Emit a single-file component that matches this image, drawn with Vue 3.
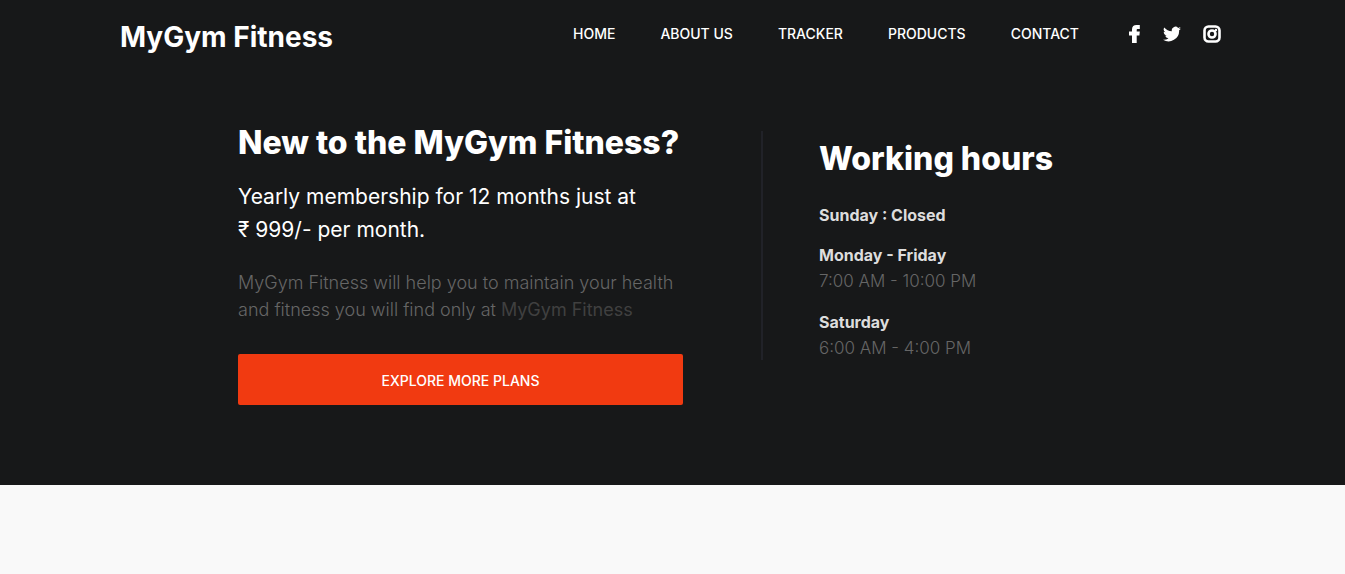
<script setup>
const links = ['Home', 'About us', 'Tracker', 'Products', 'Contact']
const hours = [
  { day: 'Monday - Friday', time: '7:00 AM - 10:00 PM' },
  { day: 'Saturday', time: '6:00 AM - 4:00 PM' },
]
</script>

<template>
  <div class="page">
    <header class="navbar">
      <a class="brand" href="#">MyGym Fitness</a>
      <nav class="menu" aria-label="Main">
        <a v-for="link in links" :key="link" href="#">{{ link }}</a>
      </nav>
      <div class="social">
        <a href="#" aria-label="Facebook">
          <svg width="12" height="18" viewBox="0 0 12 18"><path d="M3 18V10.500H0V6.500H3V4.300C3 1.500 4.700 0 7.500 0H10.800V4H9C8 4 7.700 4.400 7.700 5V6.500H10.800L10.400 10.500H7.700V18Z" /></svg>
        </a>
        <a href="#" aria-label="Twitter">
          <svg width="18" height="18" viewBox="0 0 24 24"><path d="M24 4.600a10 10 0 0 1-2.800.8 5 5 0 0 0 2.100-2.700 10 10 0 0 1-3.100 1.200 4.900 4.900 0 0 0-8.400 4.500A14 14 0 0 1 1.700 3.200 4.900 4.900 0 0 0 3.200 9.700a5 5 0 0 1-2.200-.6 4.900 4.900 0 0 0 3.900 4.900 5 5 0 0 1-2.200.1 4.900 4.900 0 0 0 4.600 3.400A10 10 0 0 1 0 19.500 14 14 0 0 0 21.500 7 10 10 0 0 0 24 4.600Z" /></svg>
        </a>
        <a href="#" aria-label="Instagram">
          <svg width="18" height="18" viewBox="0 0 18 18"><rect class="line" x="1.500" y="1.500" width="15" height="15" rx="4" /><circle class="line" cx="9" cy="9" r="3.500" /><circle cx="13" cy="5" r="1.200" /></svg>
        </a>
      </div>
    </header>

    <main class="intro">
      <section class="offer">
        <h2>New to the MyGym Fitness?</h2>
        <p class="price">Yearly membership for 12 months just at<br />₹ 999/- per month.</p>
        <p class="about">
          <span>MyGym Fitness will help you to maintain your health</span>
          <span>and fitness you will find only at</span>
          <a href="#">MyGym Fitness</a>
        </p>
        <button type="button">Explore more plans</button>
      </section>
      <section class="hours">
        <h2>Working hours</h2>
        <p class="closed"><strong>Sunday : Closed</strong></p>
        <dl>
          <template v-for="item in hours" :key="item.day">
            <dt>{{ item.day }}</dt>
            <dd>{{ item.time }}</dd>
          </template>
        </dl>
      </section>
    </main>
  </div>
</template>

<style>
body {
  background: #f9f9f9;
}
</style>

<style scoped>
.page {
  background: #171819;
  color: #fff;
  font-family: Inter, "Liberation Sans", sans-serif;
  padding-bottom: 80px;
}
a {
  color: inherit;
  text-decoration: none;
}
h2, p, dl, dd {
  margin: 0;
}
.navbar {
  box-sizing: border-box;
  max-width: 1105px;
  margin: 0 auto;
  padding: 20px 4px 20px 0;
  display: flex;
  align-items: flex-start;
}
.brand {
  font-size: 28px;
  line-height: 34px;
  font-weight: 700;
}
.menu {
  display: flex;
  gap: 45px;
  margin-left: auto;
  font-size: 14px;
  line-height: 28px;
  font-weight: 500;
  text-transform: uppercase;
}
.social {
  display: flex;
  gap: 22px;
  align-items: center;
  height: 28px;
  margin-left: 50px;
}
.social svg {
  display: block;
  fill: #fff;
}
.social .line {
  fill: none;
  stroke: #fff;
  stroke-width: 2.600;
}
.intro {
  max-width: 869px;
  margin: 0 auto;
  padding-top: 46px;
  display: flex;
}
.offer {
  width: 445px;
}
h2 {
  font-size: 32px;
  line-height: 46px;
  font-weight: 800;
  white-space: nowrap;
}
.price {
  margin-top: 14px;
  font-size: 21px;
  line-height: 33px;
  white-space: nowrap;
}
.about {
  display: flex;
  flex-wrap: wrap;
  column-gap: 5px;
  margin-top: 23px;
  font-size: 18px;
  line-height: 27px;
  font-weight: 300;
  color: #666;
}
.about a {
  color: #404040;
  font-weight: 400;
}
button {
  width: 100%;
  margin-top: 31px;
  height: 51px;
  padding: 2px 0 0;
  border: 0;
  border-radius: 2px;
  background: #f13a11;
  color: #fff;
  font: 500 14px/21px Inter, "Liberation Sans", sans-serif;
  text-transform: uppercase;
}
.hours {
  box-sizing: border-box;
  height: 229px;
  margin: 11px 0 0 78px;
  padding: 5px 0 0 56px;
  border-left: 2px solid #212228;
}
.closed {
  margin-top: 20px;
  font-size: 16px;
  line-height: 27px;
  color: #ddd;
}
dt {
  margin-top: 14px;
  font-size: 16px;
  line-height: 25px;
  font-weight: 700;
  color: #ddd;
}
dd {
  padding-bottom: 2px;
  font-size: 17px;
  line-height: 26px;
  font-weight: 300;
  color: #666;
}
</style>
